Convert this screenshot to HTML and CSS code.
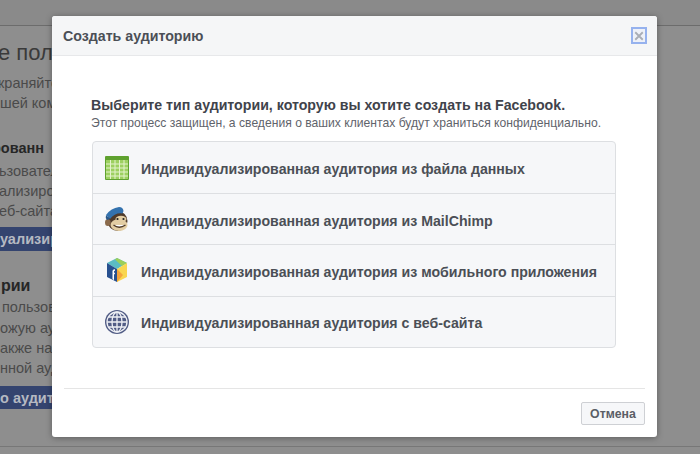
FILE: index.html
```html
<!DOCTYPE html>
<html lang="ru">
<head>
<meta charset="utf-8">
<title>Создать аудиторию</title>
<link rel="stylesheet" href="styles.css">
</head>
<body>
<div class="page">
  <div class="topbar"></div>
  <div class="backdrop-col">
    <div class="bg-title">е пол</div>
    <div class="bg-text bg-intro">краняйте</div>
    <div class="bg-text">шей ком</div>
    <div class="bg-head bg-head-1">рованн</div>
    <div class="bg-text bg-shift">ьзовател</div>
    <div class="bg-text bg-shift">ализиров</div>
    <div class="bg-text bg-shift">еб-сайта и</div>
    <div class="bg-btn">уализир</div>
    <div class="bg-head bg-head-2">рии</div>
    <div class="bg-text bg-list">пользова</div>
    <div class="bg-text">ожую ауд</div>
    <div class="bg-text">акже на с</div>
    <div class="bg-text">нной ауд</div>
    <div class="bg-btn bg-btn-2">о аудитор</div>
  </div>
  <div class="bottomline"></div>
</div>

<div class="modal">
  <header class="modal-head">
    <h1 class="modal-title">Создать аудиторию</h1>
    <button class="close" aria-label="Закрыть">
      <svg width="12" height="12" viewBox="0 0 12 12"><path d="M1.500 1.500l9 9M10.500 1.500l-9 9" stroke="#a9adb5" stroke-width="2.200" fill="none"/></svg>
    </button>
  </header>
  <div class="modal-body">
    <h2 class="lead">Выберите тип аудитории, которую вы хотите создать на Facebook.</h2>
    <p class="sub">Этот процесс защищен, а сведения о ваших клиентах будут храниться конфиденциально.</p>
    <ul class="options">
      <li class="option">
        <svg class="icon" width="26" height="26" viewBox="0 0 26 26">
          <rect x="1" y="1" width="24" height="24" rx="1" fill="#5fa12f"/>
          <rect x="2" y="5" width="22" height="19" fill="#9dd060"/>
          <path d="M6.500 5v19M11 5v19M15.500 5v19M20 5v19M2 9h22M2 13h22M2 17h22M2 21h22" stroke="#e4f3cc" stroke-width="1" fill="none"/>
        </svg>
        <span class="option-label">Индивидуализированная аудитория из файла данных</span>
      </li>
      <li class="option">
        <svg class="icon" width="26" height="26" viewBox="0 0 26 26">
          <circle cx="13.500" cy="15" r="10" fill="#4f3a2a"/>
          <ellipse cx="3.800" cy="16.500" rx="2.800" ry="3.500" fill="#8a6a4c"/>
          <ellipse cx="15" cy="19" rx="8.500" ry="6" fill="#e3cda3"/>
          <ellipse cx="17" cy="13" rx="5.500" ry="3.200" fill="#e3cda3"/>
          <circle cx="13.500" cy="13" r="1.100" fill="#222"/>
          <circle cx="19.500" cy="13" r="1.100" fill="#222"/>
          <path d="M9.500 19q5.500 4.500 12 0" stroke="#4d3826" stroke-width="1.300" fill="#fff"/>
          <path d="M2 9Q7 2 15 1q4 0 4.500 4l-1 2.500Q11 6.500 6 13z" fill="#3472ae"/>
          <path d="M2 9q-1 3 1 5l3-1z" fill="#28578a"/>
        </svg>
        <span class="option-label">Индивидуализированная аудитория из MailChimp</span>
      </li>
      <li class="option">
        <svg class="icon" width="26" height="26" viewBox="0 0 26 26">
          <path d="M13 1l10 5-10 6-10-6z" fill="#5bbcc4"/>
          <path d="M13 1l10 5-5 3-7-6.500z" fill="#9ccf5a"/>
          <path d="M3 6l10 6v13L3 20z" fill="#27508f"/>
          <path d="M13 12l10-6v14l-10 5z" fill="#f9d650"/>
          <path d="M13 12l6 6-6 7z" fill="#f3a33c"/>
          <path d="M8.500 22v-8q0-2 2.500-1.800v1.600q-1 0-1 .7v1.200h1l-.2 1.600h-.8v6z" fill="#fff"/>
        </svg>
        <span class="option-label">Индивидуализированная аудитория из мобильного приложения</span>
      </li>
      <li class="option">
        <svg class="icon" width="26" height="26" viewBox="0 0 26 26">
          <circle cx="13" cy="13" r="12" fill="#515c85"/>
          <g stroke="#eef0f5" stroke-width="1.300" fill="none">
            <circle cx="13" cy="13" r="10"/>
            <ellipse cx="13" cy="13" rx="5" ry="10"/>
            <path d="M13 3v20M3 13h20M4.500 8h17M4.500 18h17"/>
          </g>
        </svg>
        <span class="option-label">Индивидуализированная аудитория с веб-сайта</span>
      </li>
    </ul>
  </div>
  <footer class="modal-foot">
    <button class="cancel">Отмена</button>
  </footer>
</div>
</body>
</html>
```
FILE: styles.css
```css
* { box-sizing: border-box; }
html, body { margin: 0; height: 100%; }
body {
  width: 700px;
  height: 454px;
  overflow: hidden;
  position: relative;
  background: #8e8e8e;
  font-family: "Liberation Sans", Arial, sans-serif;
}
.page { height: 454px; display: flex; flex-direction: column; }
.topbar { height: 26px; flex: none; background: #8a8a8a; border-bottom: 1px solid #6c6c6c; }
.backdrop-col {
  flex: 1;
  width: 52px;
  overflow: hidden;
  white-space: nowrap;
  color: #4a4a4a;
  font-size: 14.500px;
  line-height: 20px;
}
.bg-title { font-size: 22px; line-height: 24px; margin-top: 15px; margin-left: -2px; color: #3a3a3a; }
.bg-text { height: 20.300px; }
.bg-intro { margin-top: 8px; margin-left: -2px; }
.bg-head { font-weight: bold; color: #262626; font-size: 14.500px; }
.bg-head-1 { margin-top: 24.500px; margin-left: -8px; margin-bottom: 2.500px; }
.bg-shift { margin-left: -1px; }
.bg-btn {
  height: 24px;
  margin-top: 6px;
  background: #34446f;
  color: #b5b9c2;
  font-weight: bold;
  font-size: 14.500px;
  line-height: 24px;
}
.bg-head-2 { margin-top: 25px; margin-left: 1px; margin-bottom: 1px; font-size: 16px; }
.bg-list { margin-left: 2px; }
.bg-btn-2 { height: 23px; margin-top: 7px; }
.bottomline { height: 8px; flex: none; border-top: 1px solid #777; }

.modal {
  position: absolute;
  left: 52px;
  top: 16px;
  width: 605px;
  height: 421px;
  background: #fff;
  border-radius: 3px;
  box-shadow: 0 1px 6px rgba(0, 0, 0, .35);
  display: flex;
  flex-direction: column;
}
.modal-head {
  height: 40px;
  flex: none;
  background: #f5f6f7;
  border-bottom: 1px solid #e7e8ea;
  border-radius: 3px 3px 0 0;
  display: flex;
  align-items: center;
  justify-content: space-between;
  padding: 0 10px 0 11px;
}
.modal-title { margin: 0; font-size: 14.200px; font-weight: bold; color: #4b4f56; }
.close {
  width: 16px;
  height: 17px;
  padding: 0;
  background: #eef1f8;
  border: 2px solid #96b2ee;
  display: flex;
  align-items: center;
  justify-content: center;
}
.close svg { width: 10px; height: 10px; }
.modal-body { flex: 1; padding: 41px 41px 0 40px; }
.lead { margin: 0 0 0 -1px; font-size: 14.180px; line-height: 17px; font-weight: bold; color: #3f434b; }
.sub { margin: 2px 0 0 -1px; font-size: 12.150px; line-height: 15px; color: #5f636b; }
.options {
  list-style: none;
  margin: 10px 0 0;
  padding: 0;
  background: #f6f7f9;
  border: 1px solid #dddfe2;
  border-radius: 4px;
}
.option {
  height: 51.200px;
  display: flex;
  align-items: center;
  gap: 11px;
  padding-left: 11px;
  font-size: 14.150px;
  font-weight: bold;
  color: #4b4f56;
  border-top: 1px solid #dddfe2;
}
.option:first-child { border-top: 0; }
.option-label { padding-top: 3px; }
.icon { flex: none; }
.modal-foot {
  height: 49px;
  flex: none;
  margin: 0 12px;
  border-top: 1px solid #e5e5e5;
  display: flex;
  justify-content: flex-end;
  align-items: flex-start;
  padding-top: 13px;
}
.cancel {
  width: 64px;
  height: 23px;
  padding: 0;
  font: bold 12.300px "Liberation Sans", Arial, sans-serif;
  color: #5a5e66;
  background: #f6f7f9;
  border: 1px solid #ced0d4;
  border-radius: 2px;
}
```
